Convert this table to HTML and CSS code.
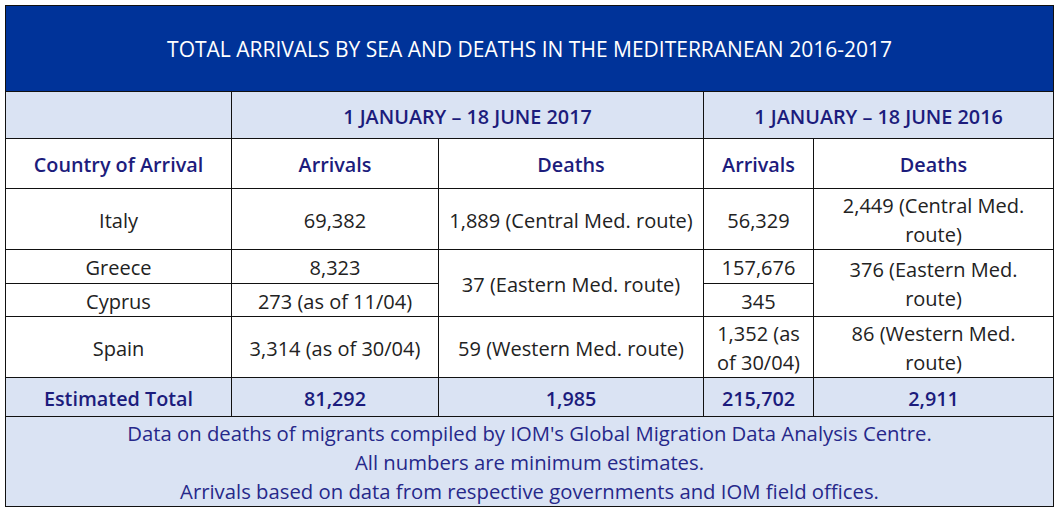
FILE: index.html
```html
<!DOCTYPE html>
<html>
<head>
<meta charset="utf-8">
<link rel="stylesheet" href="styles.css">
</head>
<body>
<div class="wrap">
<table class="tbl">
  <colgroup>
    <col class="c1"><col class="c2"><col class="c3"><col class="c4"><col class="c5">
  </colgroup>
  <tr class="r-title"><td colspan="5" class="title">TOTAL ARRIVALS BY SEA AND DEATHS IN THE MEDITERRANEAN 2016-2017</td></tr>
  <tr class="r-period">
    <td class="shade"></td>
    <td colspan="2" class="shade head">1 JANUARY – 18 JUNE 2017</td>
    <td colspan="2" class="shade head">1 JANUARY – 18 JUNE 2016</td>
  </tr>
  <tr class="r-head">
    <td class="head">Country of Arrival</td>
    <td class="head">Arrivals</td>
    <td class="head">Deaths</td>
    <td class="head">Arrivals</td>
    <td class="head">Deaths</td>
  </tr>
  <tr class="r-italy">
    <td>Italy</td>
    <td>69,382</td>
    <td>1,889 (Central Med. route)</td>
    <td>56,329</td>
    <td>2,449 (Central Med.<br>route)</td>
  </tr>
  <tr class="r-greece">
    <td>Greece</td>
    <td>8,323</td>
    <td rowspan="2">37 (Eastern Med. route)</td>
    <td>157,676</td>
    <td rowspan="2">376 (Eastern Med.<br>route)</td>
  </tr>
  <tr class="r-cyprus">
    <td>Cyprus</td>
    <td>273 (as of 11/04)</td>
    <td>345</td>
  </tr>
  <tr class="r-spain">
    <td>Spain</td>
    <td>3,314 (as of 30/04)</td>
    <td>59 (Western Med. route)</td>
    <td>1,352 (as<br>of 30/04)</td>
    <td>86 (Western Med.<br>route)</td>
  </tr>
  <tr class="r-total">
    <td class="shade head">Estimated Total</td>
    <td class="shade head">81,292</td>
    <td class="shade head">1,985</td>
    <td class="shade head">215,702</td>
    <td class="shade head">2,911</td>
  </tr>
  <tr class="r-foot">
    <td colspan="5" class="shade foot">Data on deaths of migrants compiled by IOM's Global Migration Data Analysis Centre.<br>All numbers are minimum estimates.<br>Arrivals based on data from respective governments and IOM field offices.</td>
  </tr>
</table>
</div>
</body>
</html>
```
FILE: styles.css
```css
html, body {
  margin: 0;
  padding: 0;
  background: #ffffff;
}
.wrap {
  padding: 5px 0 0 5px;
}
.tbl {
  border-collapse: collapse;
  table-layout: fixed;
  width: 1048px;
  font-family: "Open Sans", "Noto Sans", sans-serif;
  font-size: 20px;
  color: #222222;
}
.c1 { width: 226px; }
.c2 { width: 207px; }
.c3 { width: 265px; }
.c4 { width: 110px; }
.c5 { width: 240px; }
.tbl td {
  border: 1px solid #111111;
  text-align: center;
  vertical-align: middle;
  padding: 2px 2px 0;
  line-height: 29px;
}
.title {
  background: #003399;
  color: #ffffff;
  font-size: 21px;
  font-weight: 500;
  height: 83px;
}
.shade {
  background: #dae3f3;
}
.head {
  color: #1c1c7c;
  font-weight: 600;
  font-size: 19.8px;
}
.r-period td { height: 44px; }
.r-head td { height: 47px; }
.r-italy td { height: 58px; }
.r-greece td { height: 31px; }
.r-cyprus td { height: 30px; }
.r-spain td { height: 56px; }
.r-total td { height: 36px; }
.foot {
  color: #26288a;
  font-size: 20.3px;
  line-height: 28.6px;
  padding-top: 1px;
  height: 84px;
}
```
